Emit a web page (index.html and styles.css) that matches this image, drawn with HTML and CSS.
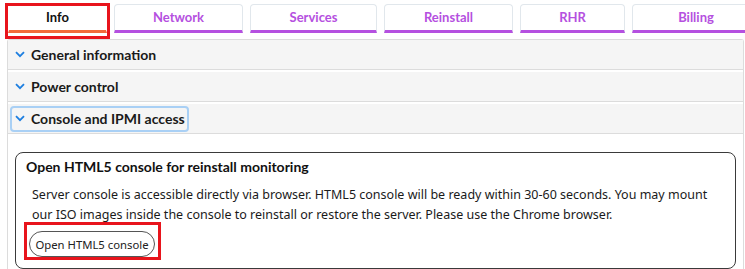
FILE: index.html
```html
<!DOCTYPE html>
<html>
<head>
<meta charset="utf-8">
<link rel="stylesheet" href="styles.css">
</head>
<body>
<div class="page">
  <nav class="tabs">
    <div class="tab tab-active">Info</div>
    <div class="tab">Network</div>
    <div class="tab">Services</div>
    <div class="tab">Reinstall</div>
    <div class="tab">RHR</div>
    <div class="tab">Billing</div>
  </nav>
  <div class="mark mark-tab"></div>
  <section class="panel">
    <div class="acc-header"><span class="chev"><svg width="10" height="7" viewBox="0 0 10 7"><path d="M1 1.2 L5 5.2 L9 1.2" fill="none" stroke="#1e7fe0" stroke-width="1.8"/></svg></span>General information</div>
    <div class="acc-header"><span class="chev"><svg width="10" height="7" viewBox="0 0 10 7"><path d="M1 1.2 L5 5.2 L9 1.2" fill="none" stroke="#1e7fe0" stroke-width="1.8"/></svg></span>Power control</div>
    <div class="acc-header acc-open"><span class="focus"><span class="chev"><svg width="10" height="7" viewBox="0 0 10 7"><path d="M1 1.2 L5 5.2 L9 1.2" fill="none" stroke="#1e7fe0" stroke-width="1.8"/></svg></span>Console and IPMI access</span></div>
    <div class="acc-body">
      <div class="card">
        <h3 class="card-title">Open HTML5 console for reinstall monitoring</h3>
        <p class="card-text">Server console is accessible directly via browser. HTML5 console will be ready within 30-60 seconds. You may mount our ISO images inside the console to reinstall or restore the server. Please use the Chrome browser.</p>
        <div class="btn-wrap">
          <button class="btn">Open HTML5 console</button>
          <div class="mark mark-btn"></div>
        </div>
      </div>
    </div>
  </section>
</div>
</body>
</html>
```
FILE: styles.css
```css
html, body {
  margin: 0;
  padding: 0;
  background: #fff;
}
body {
  font-family: "Noto Sans", "Open Sans", sans-serif;
  color: #1a1a1a;
  overflow: hidden;
  width: 745px;
  height: 269px;
}
.page {
  position: relative;
}
.tabs {
  display: flex;
  gap: 7px;
  padding: 4px 0 0 8px;
  white-space: nowrap;
  overflow: hidden;
}
.tab {
  flex: 0 0 auto;
  height: 25px;
  line-height: 25px;
  padding: 0 35px;
  border: 1px solid #e1e7ec;
  border-bottom: 3px solid #b550e0;
  border-radius: 4px 4px 0 0;
  font-family: Lato, "Noto Sans", sans-serif;
  font-size: 13px;
  font-weight: 700;
  color: #b550e0;
  text-align: center;
}
.tab:nth-child(2) { width: 57px; }
.tab:nth-child(3) { width: 55px; }
.tab:nth-child(4) { width: 57px; }
.tab:nth-child(5) { width: 33px; }
.tab:nth-child(6) { width: 48px; padding: 0 39px; }
.tab-active {
  width: 27px;
  color: #111;
  border-color: transparent;
  border-bottom-color: #f26a3a;
}
.mark {
  position: absolute;
  border: 3px solid #e8141c;
  pointer-events: none;
}
.mark-tab {
  left: 5px;
  top: 3px;
  width: 99px;
  height: 30px;
}
.panel {
  margin: 6px 1px 0 7px;
  border: 1px solid #dcdcdc;
  border-bottom: none;
  border-radius: 3px 3px 0 0;
}
.acc-header {
  height: 29px;
  display: flex;
  align-items: center;
  background: #f5f5f5;
  border-bottom: 1px solid #dcdcdc;
  margin-bottom: 2px;
  padding-left: 5px;
  font-family: Lato, "Noto Sans", sans-serif;
  font-size: 14px;
  font-weight: 700;
  color: #1a1a1a;
}
.acc-open {
  margin-bottom: 0;
}
.focus {
  display: flex;
  align-items: center;
  height: 22px;
  padding: 0 2px 0 0;
  margin-left: -3px;
  border: 2px solid #a9d0f5;
  border-radius: 4px;
}
.chev {
  display: inline-flex;
  width: 12px;
  margin: 0 5px 0 1px;
  justify-content: center;
}
.focus .chev {
  margin-left: 2px;
}
.acc-body {
  padding: 18px 7px 0 7px;
  background: #fff;
}
.card {
  border: 1px solid #3a3a3a;
  border-radius: 8px;
  padding: 4px 10px 9px 10px;
  height: 102px;
}
.card-title {
  margin: 0;
  font-family: Lato, "Noto Sans", sans-serif;
  font-size: 14px;
  font-weight: 700;
  line-height: 20px;
  color: #111;
}
.card-text {
  margin: 8px 0 0 6px;
  font-size: 12.5px;
  line-height: 20px;
  color: #1a1a1a;
}
.btn-wrap {
  position: relative;
  margin-top: 6px;
  margin-left: 3px;
}
.btn {
  font-family: "Noto Sans", sans-serif;
  font-size: 11.3px;
  color: #222;
  background: #fff;
  border: 1px solid #555;
  border-radius: 13px;
  height: 26px;
  padding: 0;
  width: 126px;
  white-space: nowrap;
}
.mark-btn {
  left: -5px;
  top: -9px;
  width: 131px;
  height: 32px;
}
```
